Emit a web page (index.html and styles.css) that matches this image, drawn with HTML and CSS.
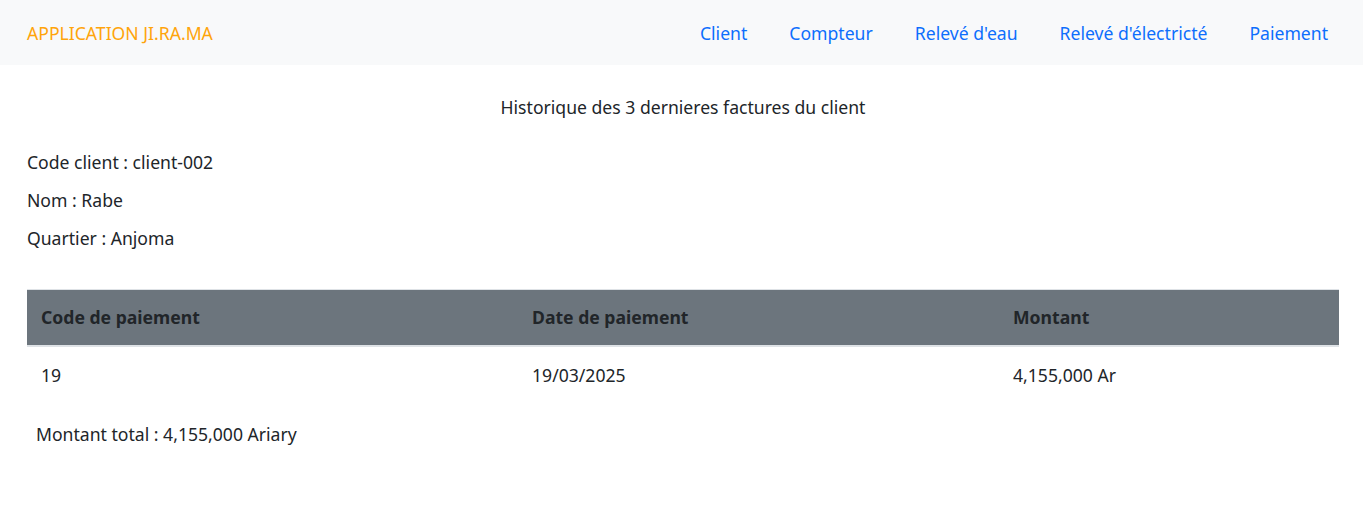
FILE: index.html
```html
<!DOCTYPE html>
<html lang="fr">
<head>
<meta charset="utf-8">
<title>Application JI.RA.MA</title>
<link rel="stylesheet" href="styles.css">
</head>
<body>
<nav class="navbar">
  <span class="brand">APPLICATION JI.RA.MA</span>
  <ul class="nav">
    <li><a href="#">Client</a></li>
    <li><a href="#">Compteur</a></li>
    <li><a href="#">Relevé d'eau</a></li>
    <li><a href="#">Relevé d'électricté</a></li>
    <li><a href="#">Paiement</a></li>
  </ul>
</nav>
<main class="content">
  <h1 class="title">Historique des 3 dernieres factures du client</h1>
  <div class="info">
    <p>Code client : client-002</p>
    <p>Nom : Rabe</p>
    <p>Quartier : Anjoma</p>
  </div>
  <table class="table">
    <thead>
      <tr>
        <th class="c1">Code de paiement</th>
        <th class="c2">Date de paiement</th>
        <th class="c3">Montant</th>
      </tr>
    </thead>
    <tbody>
      <tr>
        <td>19</td>
        <td>19/03/2025</td>
        <td>4,155,000 Ar</td>
      </tr>
    </tbody>
  </table>
  <p class="total">Montant total : 4,155,000 Ariary</p>
</main>
</body>
</html>
```
FILE: styles.css
```css
* { box-sizing: border-box; }
body {
  margin: 0;
  font-family: "Noto Sans", "Open Sans", sans-serif;
  font-size: 17.6px;
  color: #212529;
  background: #fff;
}
.navbar {
  height: 65px;
  background: #f8f9fa;
  display: flex;
  align-items: center;
  justify-content: space-between;
  padding: 0 35px 0 27px;
}
.brand {
  color: #ffa40a;
}
.nav {
  list-style: none;
  margin: 0;
  padding: 0;
  display: flex;
  gap: 42px;
}
.nav a {
  color: #0d6efd;
  text-decoration: none;
}
.content {
  padding: 0 24px 0 27px;
}
.title {
  margin: 0;
  padding-top: 30px;
  text-align: center;
  font-size: 17.6px;
  font-weight: 400;
  line-height: 24px;
}
.info {
  padding-top: 31px;
}
.info p {
  margin: 0 0 14px;
  line-height: 24px;
}
.table {
  width: 100%;
  margin-top: 39px;
  border-collapse: collapse;
  border-top: 1px solid #dee2e6;
}
.table th {
  background: #6c757d;
  color: #212529;
  font-weight: 700;
  text-align: left;
  height: 56px;
  padding: 0 14px;
  border-bottom: 2px solid #dee2e6;
}
.table td {
  text-align: left;
  height: 58px;
  padding: 0 14px;
}
.c1 { width: 491px; }
.c2 { width: 481px; }
.total {
  margin: 0;
  padding-top: 18px;
  padding-left: 9px;
  line-height: 24px;
}
```
